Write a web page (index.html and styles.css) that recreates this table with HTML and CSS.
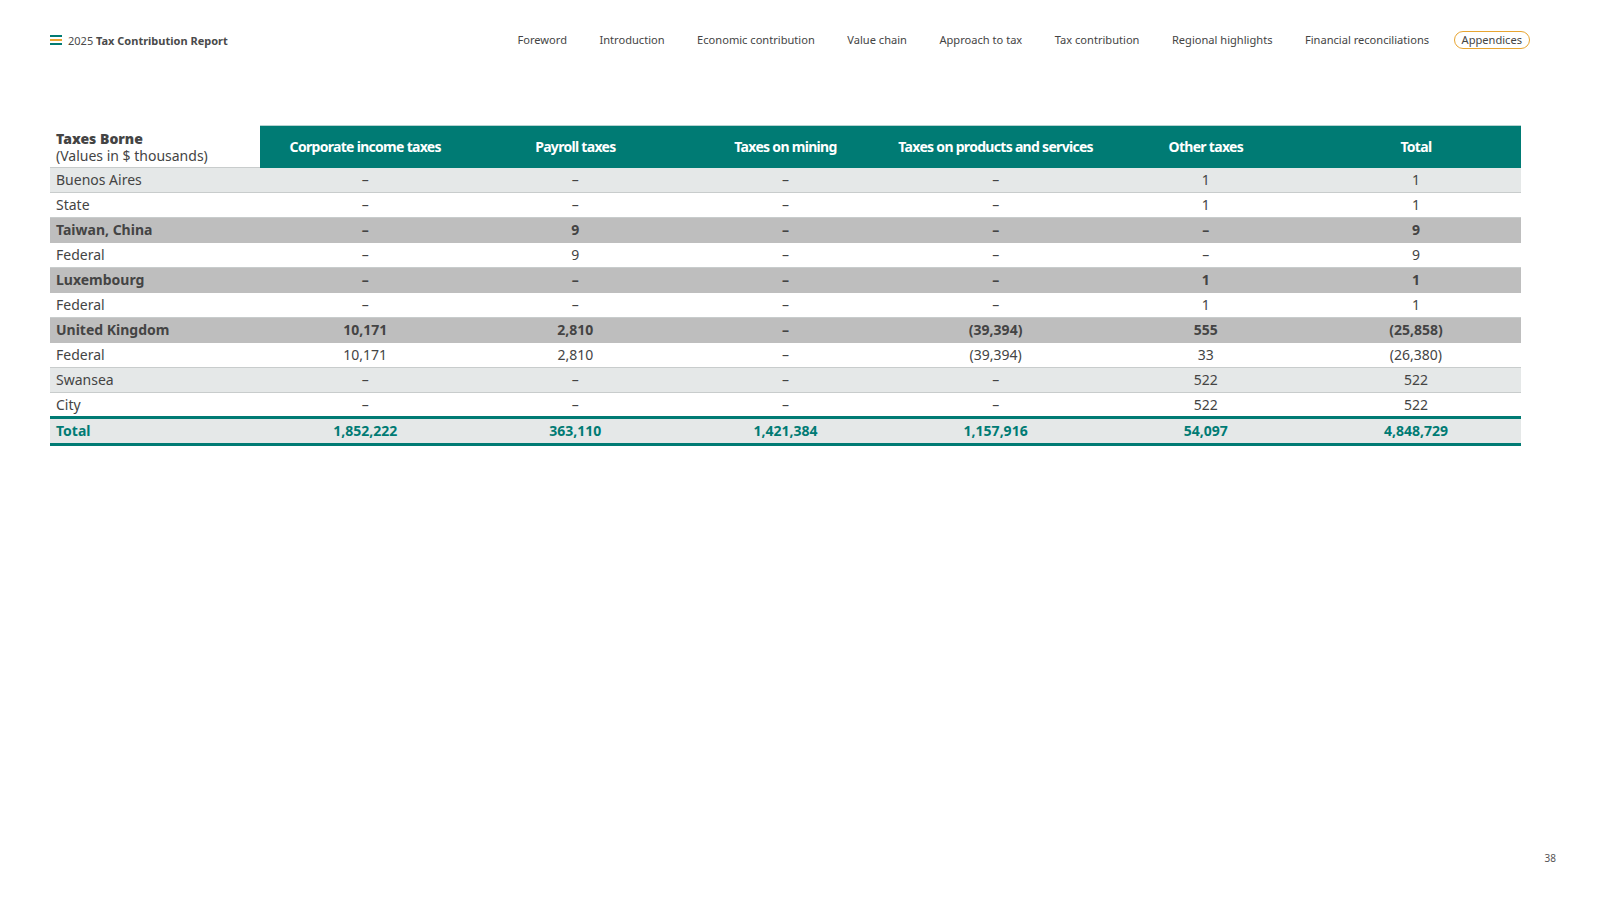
FILE: index.html
```html
<!DOCTYPE html>
<html lang="en">
<head>
<meta charset="utf-8">
<title>2025 Tax Contribution Report</title>
<link rel="stylesheet" href="styles.css">
</head>
<body>
<div class="page">
  <header class="topbar">
    <div class="brand">
      <svg class="burger" width="12" height="10" viewBox="0 0 12 10" aria-hidden="true">
        <rect x="0" y="0" width="12" height="2" fill="#007b74"/>
        <rect x="0" y="4" width="12" height="2" fill="#e8a531"/>
        <rect x="0" y="8" width="12" height="2" fill="#007b74"/>
      </svg>
      <span class="brand-text">2025 <b>Tax Contribution Report</b></span>
    </div>
    <nav class="nav">
      <a>Foreword</a>
      <a>Introduction</a>
      <a>Economic contribution</a>
      <a>Value chain</a>
      <a>Approach to tax</a>
      <a>Tax contribution</a>
      <a>Regional highlights</a>
      <a>Financial reconciliations</a>
      <a class="active">Appendices</a>
    </nav>
  </header>

  <main class="content">
    <table class="tax">
      <thead>
        <tr>
          <th class="label"><b>Taxes Borne</b><br><span>(Values in $ thousands)</span></th>
          <th>Corporate income taxes</th>
          <th>Payroll taxes</th>
          <th>Taxes on mining</th>
          <th>Taxes on products and services</th>
          <th>Other taxes</th>
          <th>Total</th>
        </tr>
      </thead>
      <tbody>
        <tr class="light"><td>Buenos Aires</td><td>–</td><td>–</td><td>–</td><td>–</td><td>1</td><td>1</td></tr>
        <tr><td>State</td><td>–</td><td>–</td><td>–</td><td>–</td><td>1</td><td>1</td></tr>
        <tr class="country"><td>Taiwan, China</td><td>–</td><td>9</td><td>–</td><td>–</td><td>–</td><td>9</td></tr>
        <tr><td>Federal</td><td>–</td><td>9</td><td>–</td><td>–</td><td>–</td><td>9</td></tr>
        <tr class="country"><td>Luxembourg</td><td>–</td><td>–</td><td>–</td><td>–</td><td>1</td><td>1</td></tr>
        <tr><td>Federal</td><td>–</td><td>–</td><td>–</td><td>–</td><td>1</td><td>1</td></tr>
        <tr class="country"><td>United Kingdom</td><td>10,171</td><td>2,810</td><td>–</td><td>(39,394)</td><td>555</td><td>(25,858)</td></tr>
        <tr><td>Federal</td><td>10,171</td><td>2,810</td><td>–</td><td>(39,394)</td><td>33</td><td>(26,380)</td></tr>
        <tr class="light"><td>Swansea</td><td>–</td><td>–</td><td>–</td><td>–</td><td>522</td><td>522</td></tr>
        <tr><td>City</td><td>–</td><td>–</td><td>–</td><td>–</td><td>522</td><td>522</td></tr>
      </tbody>
      <tfoot>
        <tr><td>Total</td><td>1,852,222</td><td>363,110</td><td>1,421,384</td><td>1,157,916</td><td>54,097</td><td>4,848,729</td></tr>
      </tfoot>
    </table>
  </main>

  <footer class="pageno">38</footer>
</div>
</body>
</html>
```

FILE: styles.css
```css
* { box-sizing: border-box; }

html, body {
  margin: 0;
  padding: 0;
  background: #ffffff;
}

body {
  font-family: "Noto Sans", "Open Sans", "DejaVu Sans", sans-serif;
  color: #444444;
}

.page {
  width: 1607px;
  height: 898px;
  position: relative;
  padding: 0 77px 0 50px;
}

.topbar {
  display: flex;
  align-items: center;
  justify-content: space-between;
  height: 80px;
}

.brand {
  display: flex;
  align-items: center;
  gap: 6px;
  font-size: 11px;
  color: #4a4a4a;
}

.burger { display: block; }

.brand-text b { font-weight: 700; }

.nav {
  display: flex;
  align-items: center;
  gap: 32.5px;
  font-size: 11.1px;
  color: #444444;
}

.nav a {
  display: block;
  line-height: 16px;
  white-space: nowrap;
}

.nav a.active {
  border: 1.5px solid #e8a531;
  border-radius: 10px;
  padding: 0 7px;
  margin-left: -8px;
  line-height: 16px;
}

.content {
  padding-top: 45px;
}

.tax {
  width: 1471px;
  border-collapse: collapse;
  table-layout: fixed;
  font-size: 14px;
}

.tax th {
  background: #007b74;
  color: #ffffff;
  font-weight: 700;
  font-size: 14px;
  letter-spacing: -0.7px;
  height: 42px;
  text-align: center;
  vertical-align: middle;
  padding: 0 4px;
  border-top: 1px solid #b6d3d1;
}

.tax th.label {
  background: #ffffff;
  color: #444444;
  text-align: left;
  letter-spacing: 0;
  padding: 4px 6px 2px;
  line-height: 17px;
  border-top: none;
  border-bottom: 1px solid #c8cccc;
}

.tax th.label span {
  font-weight: 400;
}

.tax td {
  height: 25px;
  padding: 0 6px;
  text-align: center;
  vertical-align: middle;
  border-bottom: 1px solid #c8cccc;
  line-height: 18px;
}

.tax td:first-child {
  text-align: left;
}

.tax tr.light td { background: #e5e8e8; }

.tax tr.country td {
  background: #bebebe;
  font-weight: 700;
  border-bottom-color: #bebebe;
}

.tax tbody tr:last-child td { border-bottom: none; }

.tax tfoot td {
  background: #e5e8e8;
  color: #007b74;
  font-weight: 700;
  border-top: 3px solid #007b74;
  border-bottom: 3px solid #007b74;
  height: 27px;
}

.pageno {
  position: absolute;
  right: 51px;
  top: 851px;
  font-size: 10px;
  color: #555555;
}
```
